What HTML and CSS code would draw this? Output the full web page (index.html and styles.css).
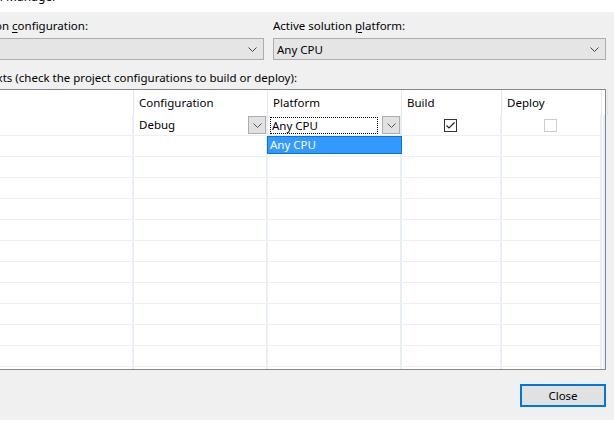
FILE: index.html
```html
<!DOCTYPE html>
<html>
<head>
<meta charset="utf-8">
<link rel="stylesheet" href="styles.css">
</head>
<body>
<div class="titlebar">
  <div class="clip clip-title"><span>Configuration Manager</span></div>
  <div class="caption-btns"><span class="cap-help">?</span><span class="cap-close">✕</span></div>
</div>
<div class="dialog">
  <div class="selectors">
    <div class="field">
      <div class="clip clip-label"><span>Active solution <u>c</u>onfiguration:</span></div>
      <div class="combo combo-left">
        <span></span>
        <svg class="chev" width="9" height="5" viewBox="0 0 9 5"><path d="M0.5 0.5 L4.5 4.5 L8.5 0.5" fill="none" stroke="#444" stroke-width="1"/></svg>
      </div>
    </div>
    <div class="field">
      <div class="label">Active solution <u>p</u>latform:</div>
      <div class="combo">
        <span>Any CPU</span>
        <svg class="chev" width="9" height="5" viewBox="0 0 9 5"><path d="M0.5 0.5 L4.5 4.5 L8.5 0.5" fill="none" stroke="#444" stroke-width="1"/></svg>
      </div>
    </div>
  </div>
  <div class="clip clip-list"><span>Project contexts (check the project configurations to build or deploy):</span></div>
  <div class="grid">
    <div class="head">
      <div class="hcell"></div>
      <div class="hcell">Configuration</div>
      <div class="hcell">Platform</div>
      <div class="hcell">Build</div>
      <div class="hcell">Deploy</div>
      <div class="hcell"></div>
    </div>
    <div class="body">
      <div class="row">
        <div class="cell"></div>
        <div class="cell cell-combo">
          <span class="cell-text">Debug</span>
          <span class="cell-btn"><svg width="9" height="5" viewBox="0 0 9 5"><path d="M0.5 0.5 L4.5 4.5 L8.5 0.5" fill="none" stroke="#555" stroke-width="1"/></svg></span>
        </div>
        <div class="cell cell-combo cell-edit">
          <span class="edit-box">Any CPU</span>
          <span class="cell-btn"><svg width="9" height="5" viewBox="0 0 9 5"><path d="M0.5 0.5 L4.5 4.5 L8.5 0.5" fill="none" stroke="#555" stroke-width="1"/></svg></span>
        </div>
        <div class="cell cell-check">
          <span class="checkbox"><svg width="11" height="11" viewBox="0 0 11 11"><path d="M1.5 5.5 L4 8 L9.5 2.5" fill="none" stroke="#222" stroke-width="1.2"/></svg></span>
        </div>
        <div class="cell cell-check">
          <span class="checkbox disabled"></span>
        </div>
        <div class="cell"></div>
      </div>
      <div class="row"><div class="cell"></div><div class="cell"></div><div class="cell"></div><div class="cell"></div><div class="cell"></div><div class="cell"></div></div>
      <div class="row"><div class="cell"></div><div class="cell"></div><div class="cell"></div><div class="cell"></div><div class="cell"></div><div class="cell"></div></div>
      <div class="row"><div class="cell"></div><div class="cell"></div><div class="cell"></div><div class="cell"></div><div class="cell"></div><div class="cell"></div></div>
      <div class="row"><div class="cell"></div><div class="cell"></div><div class="cell"></div><div class="cell"></div><div class="cell"></div><div class="cell"></div></div>
      <div class="row"><div class="cell"></div><div class="cell"></div><div class="cell"></div><div class="cell"></div><div class="cell"></div><div class="cell"></div></div>
      <div class="row"><div class="cell"></div><div class="cell"></div><div class="cell"></div><div class="cell"></div><div class="cell"></div><div class="cell"></div></div>
      <div class="row"><div class="cell"></div><div class="cell"></div><div class="cell"></div><div class="cell"></div><div class="cell"></div><div class="cell"></div></div>
      <div class="row"><div class="cell"></div><div class="cell"></div><div class="cell"></div><div class="cell"></div><div class="cell"></div><div class="cell"></div></div>
      <div class="row"><div class="cell"></div><div class="cell"></div><div class="cell"></div><div class="cell"></div><div class="cell"></div><div class="cell"></div></div>
      <div class="row"><div class="cell"></div><div class="cell"></div><div class="cell"></div><div class="cell"></div><div class="cell"></div><div class="cell"></div></div>
      <div class="row"><div class="cell"></div><div class="cell"></div><div class="cell"></div><div class="cell"></div><div class="cell"></div><div class="cell"></div></div>
      <div class="row"><div class="cell"></div><div class="cell"></div><div class="cell"></div><div class="cell"></div><div class="cell"></div><div class="cell"></div></div>
    </div>
    <div class="dropdown">Any CPU</div>
  </div>
  <div class="footer">
    <button class="close-btn">Close</button>
  </div>
</div>
</body>
</html>
```

FILE: styles.css
```css
* { box-sizing: border-box; }
html, body { margin: 0; padding: 0; }
body {
  width: 614px;
  height: 426px;
  overflow: hidden;
  background: #ffffff;
  font-family: "Noto Sans", "Open Sans", sans-serif;
  font-size: 11.5px;
  color: #000;
}
u { text-decoration: underline; text-underline-offset: 2px; }

.titlebar {
  height: 12px;
  overflow: hidden;
  display: flex;
  justify-content: space-between;
  background: #fff;
}
.clip {
  display: flex;
  justify-content: flex-end;
  overflow: hidden;
  white-space: nowrap;
  line-height: 16px;
  flex: none;
}
.clip-title { width: 57px; margin-top: -11px; font-size: 12px; }
.caption-btns { display: flex; margin-top: -12px; line-height: 16px; font-size: 12px; }
.cap-help { width: 12px; margin-right: 45px; text-align: center; }
.cap-close { width: 12px; margin-right: 3px; text-align: center; }

.dialog {
  background: #f0f0f0;
  height: 408px;
  padding: 6px 8px 0 0;
  display: flex;
  flex-direction: column;
}
.selectors {
  display: grid;
  grid-template-columns: 264px 1fr;
  column-gap: 9px;
}
.field { display: flex; flex-direction: column; gap: 4px; }
.label { line-height: 16px; white-space: nowrap; }
.clip-label { width: 88px; }
.combo {
  height: 22px;
  border: 1px solid #adadad;
  background: #e5e5e5;
  display: flex;
  align-items: center;
  justify-content: space-between;
  padding: 0 6px 0 3px;
}
.combo-left { border-left: none; }
.chev { display: block; }

.clip-list { width: 297px; margin-top: 10px; }

.grid {
  margin-top: 3px;
  height: 281px;
  border: 1px solid #828790;
  border-left: none;
  background: #fff;
  position: relative;
}
.head, .row {
  display: grid;
  grid-template-columns: 134px 134px 134px 100px 100px 1fr;
}
.head { height: 25px; }
.hcell {
  border-right: 1px solid #e5e5e5;
  padding: 5px 0 0 5px;
  line-height: 16px;
  white-space: nowrap;
}
.body { height: 254px; overflow: hidden; }
.row { height: 21px; border-bottom: 1px solid #efefef; }
.cell { border-right: 2px solid #e8eef8; }

.cell-combo {
  display: flex;
  align-items: center;
  justify-content: space-between;
  padding-left: 5px;
}
.cell-edit { padding-left: 2px; }
.cell-text { line-height: 16px; }
.cell-btn {
  width: 18px;
  height: 18px;
  border: 1px solid #adadad;
  background: #e1e1e1;
  display: flex;
  align-items: center;
  justify-content: center;
}
.edit-box {
  width: 108px;
  height: 17px;
  border: 1px dotted #000;
  padding-left: 1px;
  line-height: 15px;
  white-space: nowrap;
}
.cell-check {
  display: flex;
  align-items: center;
  justify-content: center;
  padding-right: 1px;
}
.checkbox {
  width: 13px;
  height: 13px;
  border: 1px solid #333;
  background: #fff;
  display: flex;
  align-items: center;
  justify-content: center;
}
.checkbox.disabled { border-color: #cccccc; }

.dropdown {
  position: absolute;
  left: 267px;
  top: 46px;
  width: 135px;
  height: 18px;
  background: #3399ff;
  border: 1px solid #0078d7;
  color: #fff;
  padding-left: 2px;
  line-height: 15px;
  white-space: nowrap;
}

.footer {
  display: flex;
  justify-content: flex-end;
  margin-top: 14px;
}
.close-btn {
  width: 86px;
  height: 23px;
  border: 2px solid #0078d7;
  background: #e1e1e1;
  font-family: inherit;
  font-size: 11.5px;
  color: #000;
  padding: 0;
  line-height: 16px;
}
```
